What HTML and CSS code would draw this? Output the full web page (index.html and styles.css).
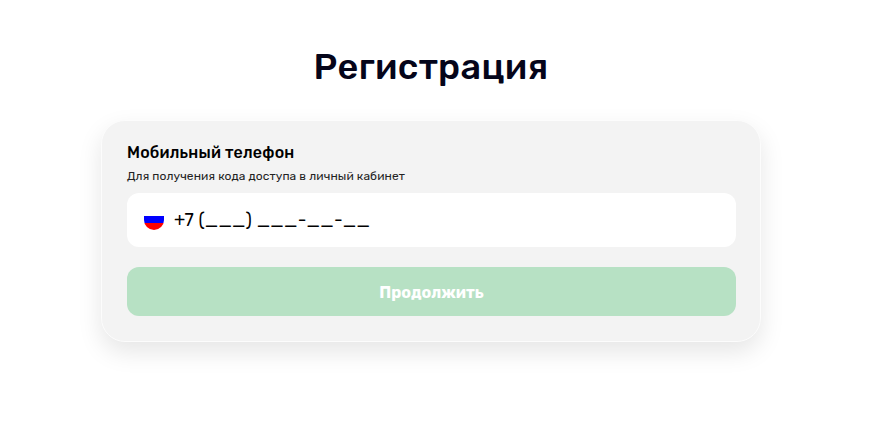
FILE: index.html
```html
<!DOCTYPE html>
<html lang="ru">
<head>
    <meta charset="UTF-8">
    <title>Регистрация</title>
    <link rel="stylesheet" href="styles.css">
</head>
<body>

<div class="container">
    <h1>Регистрация</h1>

    <form class="card">
        <div class="card-title">Мобильный телефон</div>
        <div class="card-hint">Для получения кода доступа в личный кабинет</div>

        <div class="phone-field">
            <svg class="flag" viewBox="0 0 20 20" width="20" height="20">
                <defs>
                    <clipPath id="flag-clip">
                        <path d="M0 6 Q0 4 2 4 H18 Q20 4 20 6 V10 A10 10 0 0 1 0 10 Z"/>
                    </clipPath>
                </defs>
                <g clip-path="url(#flag-clip)">
                    <rect x="0" y="4" width="20" height="2" fill="#ffffff"/>
                    <rect x="0" y="6" width="20" height="7" fill="#0000ff"/>
                    <rect x="0" y="13" width="20" height="7" fill="#ff0000"/>
                </g>
            </svg>
            <span class="phone-mask">+7 (___) ___-__-__</span>
        </div>

        <button type="button" class="submit-btn">Продолжить</button>
    </form>
</div>

</body>
</html>
```

FILE: styles.css
```css
body {
    font-family: 'Rubik', 'Inter', 'Noto Sans', sans-serif;
    background-color: #fff;
    color: #000;
    margin: 0;
    min-height: 100vh;
    padding-right: 8px;
}

.container {
    width: 660px;
    margin: 0 auto;
    padding-top: 44px;
}

h1 {
    margin: 0 0 30px;
    font-size: 36px;
    line-height: 46px;
    font-weight: 500;
    letter-spacing: 0.35px;
    text-align: center;
    color: #05051a;
}

.card {
    background-color: #f3f3f3;
    border: 1px solid #fcfcfc;
    border-radius: 24px;
    padding: 22px 24px 25px 25px;
    box-shadow: 0 10px 25px rgba(0,0,0,0.1);
}

.card-title {
    font-size: 16px;
    line-height: 20px;
    font-weight: 500;
    letter-spacing: 0.2px;
}

.card-hint {
    margin-top: 5px;
    font-size: 12px;
    line-height: 16px;
    letter-spacing: 0.1px;
    color: #222;
}

.phone-field {
    display: flex;
    align-items: center;
    gap: 10px;
    height: 54px;
    margin-top: 9px;
    padding: 0 17px;
    background-color: #fff;
    border-radius: 12px;
}

.phone-mask {
    font-size: 18px;
    font-weight: 400;
    letter-spacing: 0.2px;
}

.submit-btn {
    display: block;
    width: 100%;
    height: 49px;
    margin-top: 20px;
    padding-top: 3px;
    background-color: #b7e1c4;
    color: #fff;
    border: none;
    border-radius: 12px;
    font-family: inherit;
    font-size: 16px;
    font-weight: 700;
}
```
